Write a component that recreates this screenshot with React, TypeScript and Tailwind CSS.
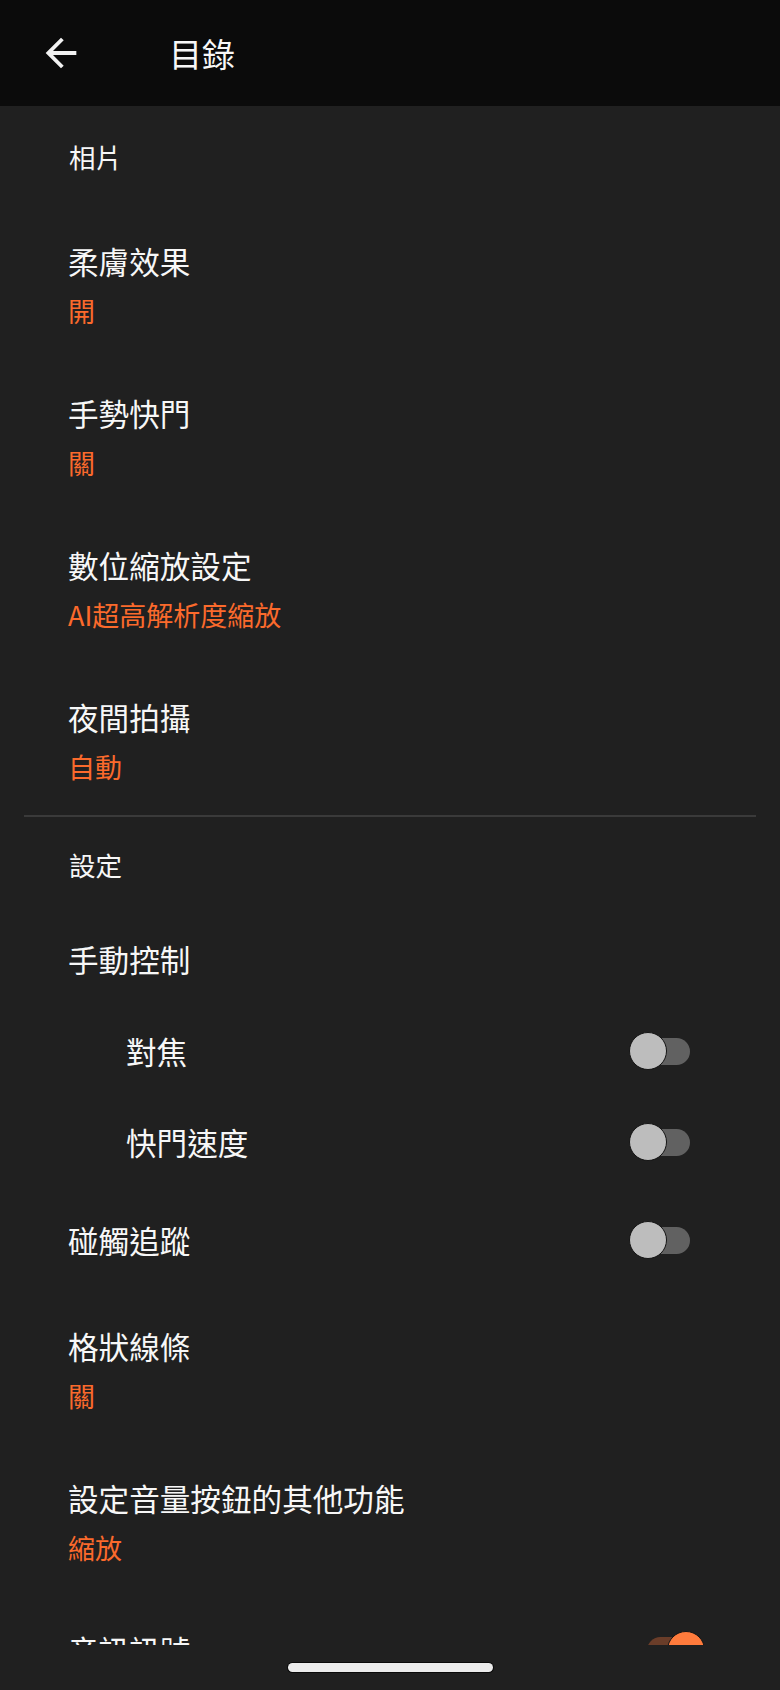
import React from 'react';

type Row =
  | { kind: 'header'; label: string; h: string }
  | { kind: 'item'; title: string; value: string }
  | { kind: 'toggle'; title: string; on: boolean; h: string; indent?: boolean }
  | { kind: 'plain'; title: string; h: string }
  | { kind: 'divider' };

const rows: Row[] = [
  { kind: 'header', label: '相片', h: 'h-[101px]' },
  { kind: 'item', title: '柔膚效果', value: '開' },
  { kind: 'item', title: '手勢快門', value: '關' },
  { kind: 'item', title: '數位縮放設定', value: 'AI超高解析度縮放' },
  { kind: 'item', title: '夜間拍攝', value: '自動' },
  { kind: 'divider' },
  { kind: 'header', label: '設定', h: 'h-[96px]' },
  { kind: 'plain', title: '手動控制', h: 'h-[93px]' },
  { kind: 'toggle', title: '對焦', on: false, h: 'h-[90px]', indent: true },
  { kind: 'toggle', title: '快門速度', on: false, h: 'h-[92px]', indent: true },
  { kind: 'toggle', title: '碰觸追蹤', on: false, h: 'h-[104px]' },
  { kind: 'item', title: '格狀線條', value: '關' },
  { kind: 'item', title: '設定音量按鈕的其他功能', value: '縮放' },
  { kind: 'toggle', title: '音訊訊號', on: true, h: 'h-[108px]' },
];

const Switch: React.FC<{ on: boolean }> = ({ on }) => (
  <div className="relative w-[76px] h-[38px] shrink-0">
    <div
      className={`absolute left-[18px] top-[6px] w-[43px] h-[27px] rounded-full ${
        on ? 'bg-[#6a3d29]' : 'bg-[#616161]'
      }`}
    />
    <div
      className={`absolute top-0 w-[38px] h-[38px] rounded-full border border-[#151515] ${
        on ? 'left-[38px] bg-[#ff7b3c]' : 'left-0 bg-[#bdbdbd]'
      }`}
    />
  </div>
);

export default function App() {
  return (
    <div
      className="w-[780px] h-[1690px] flex flex-col bg-[#202020] text-[#f7f7f7] overflow-hidden"
      style={{ fontFamily: '"Noto Sans CJK TC", "Noto Sans", sans-serif' }}
    >
      {/* toolbar */}
      <div className="h-[106px] shrink-0 bg-[#0b0b0b] flex items-center pl-[38px]">
        <svg viewBox="0 0 24 24" className="w-[46px] h-[46px]" fill="#f2f2f2">
          <path d="M20 11H7.83l5.59-5.59L12 4l-8 8 8 8 1.41-1.41L7.83 13H20v-2z" />
        </svg>
        <span className="ml-[85px] text-[33px] leading-none">目錄</span>
      </div>

      {/* list */}
      <div className="h-[1539px] shrink-0 overflow-hidden flex flex-col">
        {rows.map((r, i) => {
          if (r.kind === 'divider') {
            return <div key={i} className="h-[2px] mx-[24px] bg-[#3a3a3a] shrink-0" />;
          }
          if (r.kind === 'header') {
            return (
              <div key={i} className={`${r.h} shrink-0 flex items-center pl-[69px] text-[26.5px]`}>
                {r.label}
              </div>
            );
          }
          if (r.kind === 'item') {
            return (
              <div key={i} className="h-[152px] shrink-0 flex flex-col pt-[34px] pl-[68px]">
                <div className="text-[30.6px] leading-[40px]">{r.title}</div>
                <div className="mt-[12px] text-[27px] leading-[36px] text-[#fb6a2c]">{r.value}</div>
              </div>
            );
          }
          if (r.kind === 'plain') {
            return (
              <div key={i} className={`${r.h} shrink-0 flex items-center pl-[68px] text-[30.6px]`}>
                {r.title}
              </div>
            );
          }
          return (
            <div
              key={i}
              className={`${r.h} shrink-0 flex items-center justify-between pr-[75px] ${
                r.indent ? 'pl-[126px]' : 'pl-[68px]'
              }`}
            >
              <span className="text-[30.6px] leading-[40px]">{r.title}</span>
              <Switch on={r.on} />
            </div>
          );
        })}
      </div>

      {/* gesture bar */}
      <div className="flex-1 flex items-center justify-center">
        <div className="w-[205px] h-[9px] rounded-full bg-[#ececec] ring-1 ring-[#0a0a0a]" />
      </div>
    </div>
  );
}
